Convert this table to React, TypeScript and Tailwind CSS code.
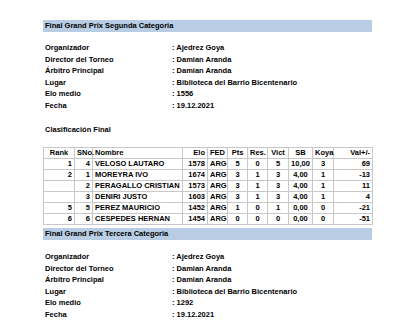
import * as React from "react";

type Info = { label: string; value: string };

const infoSegunda: Info[] = [
  { label: "Organizador", value: "Ajedrez Goya" },
  { label: "Director del Torneo", value: "Damian Aranda" },
  { label: "Árbitro Principal", value: "Damian Aranda" },
  { label: "Lugar", value: "Biblioteca del Barrio Bicentenario" },
  { label: "Elo medio", value: "1556" },
  { label: "Fecha", value: "19.12.2021" },
];

const infoTercera: Info[] = [
  { label: "Organizador", value: "Ajedrez Goya" },
  { label: "Director del Torneo", value: "Damian Aranda" },
  { label: "Árbitro Principal", value: "Damian Aranda" },
  { label: "Lugar", value: "Biblioteca del Barrio Bicentenario" },
  { label: "Elo medio", value: "1292" },
  { label: "Fecha", value: "19.12.2021" },
];

const rows = [
  ["1", "4", "VELOSO LAUTARO", "1578", "ARG", "5", "0", "5", "10,00", "3", "69"],
  ["2", "1", "MOREYRA IVO", "1674", "ARG", "3", "1", "3", "4,00", "1", "-13"],
  ["", "2", "PERAGALLO CRISTIAN", "1573", "ARG", "3", "1", "3", "4,00", "1", "11"],
  ["", "3", "DENIRI JUSTO", "1603", "ARG", "3", "1", "3", "4,00", "1", "4"],
  ["5", "5", "PEREZ MAURICIO", "1452", "ARG", "1", "0", "1", "0,00", "0", "-21"],
  ["6", "6", "CESPEDES HERNAN", "1454", "ARG", "0", "0", "0", "0,00", "0", "-51"],
];

const headers = ["Rank", "SNo.", "Nombre", "Elo", "FED", "Pts", "Res.", "Vict", "SB", "Koya", "Val+/-"];
const widths = [31, 18, 90, 25, 20, 20, 20, 21, 24, 21, 39];
const align = [
  "text-right",
  "text-right",
  "text-left",
  "text-right",
  "text-center",
  "text-center",
  "text-center",
  "text-center",
  "text-center",
  "text-center",
  "text-right",
];
const headAlign = [
  "text-center",
  "text-center",
  "text-left",
  "text-right",
  "text-center",
  "text-center",
  "text-center",
  "text-center",
  "text-center",
  "text-center",
  "text-right",
];

function Bar({ title }: { title: string }) {
  return (
    <div className="h-[12px] bg-[#b8cce4] px-[2px] leading-[12px] whitespace-nowrap">{title}</div>
  );
}

function InfoBlock({ items }: { items: Info[] }) {
  return (
    <div className="grid grid-cols-[127px_1fr] px-[2px]">
      {items.map((it) => (
        <React.Fragment key={it.label}>
          <div className="h-[11.5px] leading-[11.5px] whitespace-nowrap">{it.label}</div>
          <div className="h-[11.5px] leading-[11.5px] whitespace-nowrap">: {it.value}</div>
        </React.Fragment>
      ))}
    </div>
  );
}

export default function App() {
  return (
    <div
      className="w-[400px] h-[324px] overflow-hidden bg-white pl-[43px] pt-[20px] text-[7.5px] font-bold text-black"
      style={{ fontFamily: '"Liberation Sans", Arial, sans-serif' }}
    >
      <div className="w-[329px]">
        <Bar title="Final Grand Prix Segunda Categoria" />
        <div className="mt-[10px]">
          <InfoBlock items={infoSegunda} />
        </div>
        <div className="mt-[12.5px] px-[2px] h-[11.5px] leading-[11.5px]">Clasificación Final</div>
        <table className="mt-[12px] w-[329px] table-fixed border-collapse">
          <colgroup>
            {widths.map((w, i) => (
              <col key={i} style={{ width: w }} />
            ))}
          </colgroup>
          <thead>
            <tr className="h-[11px]">
              {headers.map((h, i) => (
                <th
                  key={h}
                  className={`border border-[#c8c8c8] px-[2px] py-0 leading-[10px] font-bold whitespace-nowrap ${headAlign[i]}`}
                >
                  {h}
                </th>
              ))}
            </tr>
          </thead>
          <tbody>
            {rows.map((r, ri) => (
              <tr key={ri} className="h-[11px]">
                {r.map((c, ci) => (
                  <td
                    key={ci}
                    className={`border border-[#c8c8c8] px-[2px] py-0 leading-[10px] whitespace-nowrap overflow-hidden ${align[ci]}`}
                  >
                    {c}
                  </td>
                ))}
              </tr>
            ))}
          </tbody>
        </table>
        <div className="mt-[3px]">
          <Bar title="Final Grand Prix Tercera Categoria" />
        </div>
        <div className="mt-[11px]">
          <InfoBlock items={infoTercera} />
        </div>
      </div>
    </div>
  );
}
